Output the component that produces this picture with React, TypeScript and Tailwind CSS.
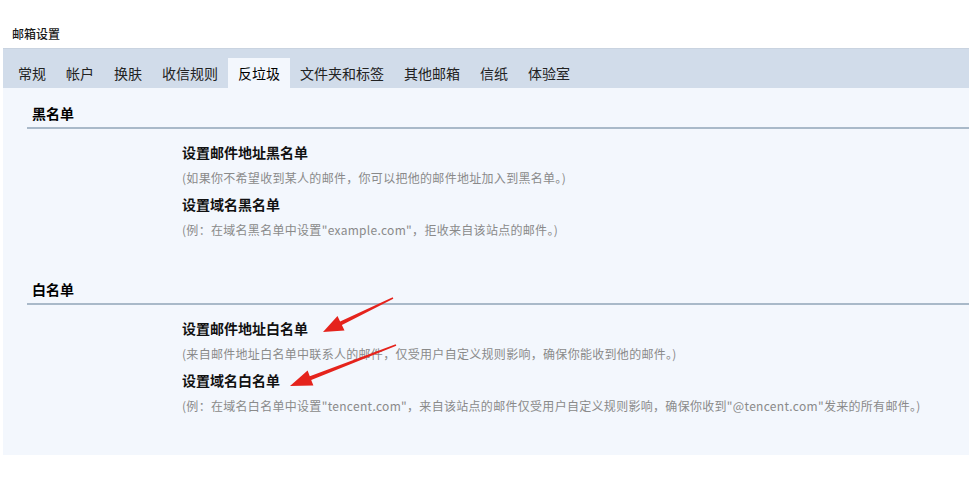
const tabs = ["常规", "帐户", "换肤", "收信规则", "反垃圾", "文件夹和标签", "其他邮箱", "信纸", "体验室"];

const sections = [
  {
    title: "黑名单",
    items: [
      { label: "设置邮件地址黑名单", desc: "(如果你不希望收到某人的邮件，你可以把他的邮件地址加入到黑名单。)" },
      { label: "设置域名黑名单", desc: "(例：在域名黑名单中设置\"example.com\"，拒收来自该站点的邮件。)" },
    ],
  },
  {
    title: "白名单",
    items: [
      { label: "设置邮件地址白名单", desc: "(来自邮件地址白名单中联系人的邮件，仅受用户自定义规则影响，确保你能收到他的邮件。)" },
      {
        label: "设置域名白名单",
        desc: "(例：在域名白名单中设置\"tencent.com\"，来自该站点的邮件仅受用户自定义规则影响，确保你收到\"@tencent.com\"发来的所有邮件。)",
      },
    ],
  },
];

function Arrows() {
  return (
    <svg className="absolute inset-0 pointer-events-none" width="969" height="485" viewBox="0 0 969 485">
      <polygon
        fill="#e5231c"
        points="323,332 344.5,330.5 341.9,325.1 393.3,298.7 392.7,297.3 340.1,321.5 337.5,316.1"
      />
      <polygon
        fill="#e5231c"
        points="290,386 313.4,385.6 311.2,380 396.3,345.7 395.7,344.3 309.8,376.2 307.6,370.6"
      />
    </svg>
  );
}

export default function App() {
  return (
    <div
      className="relative w-[969px] h-[485px] bg-white overflow-hidden"
      style={{ fontFamily: '"Noto Sans CJK SC", "Noto Sans", sans-serif' }}
    >
      <div className="h-[48px] flex items-end pb-[6px] pl-[12px] text-[12px] leading-[16px] font-medium text-[#1a1a1a]">
        邮箱设置
      </div>

      <div className="ml-[3px] h-[40px] bg-[#d1dcea] border-t border-[#c9d3e0] flex items-end pl-[5px]">
        {tabs.map((t) => (
          <div
            key={t}
            className={
              t === "反垃圾"
                ? "h-[30px] px-[10px] flex items-center text-[14px] text-black bg-[#f3f7fd]"
                : "h-[30px] px-[10px] flex items-center text-[14px] text-[#222]"
            }
          >
            {t}
          </div>
        ))}
      </div>

      <div className="ml-[3px] h-[367px] bg-[#f3f7fd] pt-[10px]">
        {sections.map((s, i) => (
          <div key={s.title} className={i === 0 ? "" : "mt-[31px]"}>
            <div className="ml-[24px] h-[31px] pl-[5px] pt-[2px] flex items-center border-b-2 border-[#a9b9c9] text-[14px] font-bold text-black">
              {s.title}
            </div>
            <div className="pl-[179px] pt-[10px]">
              {s.items.map((it) => (
                <div key={it.label}>
                  <div className="h-[26px] flex items-center text-[14px] font-bold text-[#111]">{it.label}</div>
                  <div className="h-[26px] flex items-center text-[12px] tracking-[0.3px] text-[#8a8a8a]">{it.desc}</div>
                </div>
              ))}
            </div>
          </div>
        ))}
      </div>

      <Arrows />
    </div>
  );
}
